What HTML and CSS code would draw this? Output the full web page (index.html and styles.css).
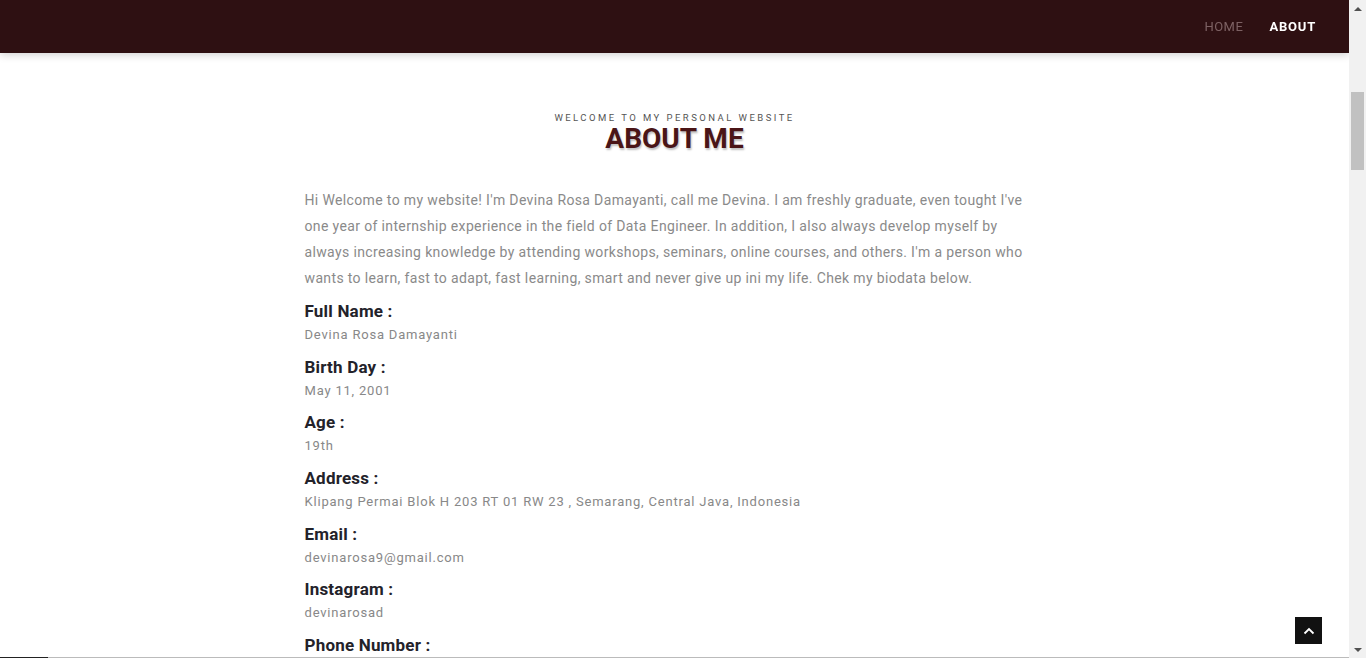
FILE: index.html
```html
<!DOCTYPE html>
<html lang="en">
<head>
<meta charset="utf-8">
<title>About Me</title>
<link rel="stylesheet" href="styles.css">
</head>
<body>
<header class="navbar">
  <nav class="nav-links">
    <a class="nav-link" href="#home">HOME</a>
    <a class="nav-link active" href="#about">ABOUT</a>
  </nav>
</header>
<main>
  <section class="about" id="about">
    <div class="container">
      <div class="section-title">
        <p class="subtitle">WELCOME TO MY PERSONAL WEBSITE</p>
        <h2 class="title">ABOUT ME</h2>
      </div>
      <p class="intro">Hi Welcome to my website! I'm Devina Rosa Damayanti, call me Devina. I am freshly graduate, even tought I've one year of internship experience in the field of Data Engineer. In addition, I also always develop myself by always increasing knowledge by attending workshops, seminars, online courses, and others. I'm a person who wants to learn, fast to adapt, fast learning, smart and never give up ini my life. Chek my biodata below.</p>
      <dl class="biodata">
        <div class="item"><dt>Full Name :</dt><dd>Devina Rosa Damayanti</dd></div>
        <div class="item"><dt>Birth Day :</dt><dd>May 11, 2001</dd></div>
        <div class="item"><dt>Age :</dt><dd>19th</dd></div>
        <div class="item"><dt>Address :</dt><dd>Klipang Permai Blok H 203 RT 01 RW 23 , Semarang, Central Java, Indonesia</dd></div>
        <div class="item"><dt>Email :</dt><dd>devinarosa9@gmail.com</dd></div>
        <div class="item"><dt>Instagram :</dt><dd>devinarosad</dd></div>
        <div class="item"><dt>Phone Number :</dt><dd>+62 812 0000 0000</dd></div>
      </dl>
    </div>
  </section>
</main>
<a class="back-to-top" href="#about" aria-label="Back to top">
  <svg width="12" height="8" viewBox="0 0 12 8"><path d="M1.5 6.5 L6 2 L10.5 6.5" fill="none" stroke="#fff" stroke-width="1.8"/></svg>
</a>
<div class="scrollbar" aria-hidden="true">
  <span class="arrow up"></span>
  <div class="track"><span class="thumb"></span></div>
  <span class="arrow down"></span>
</div>
<div class="progress-line"><span class="progress-fill"></span></div>
</body>
</html>
```
FILE: styles.css
```css
* { box-sizing: border-box; }
html, body { margin: 0; padding: 0; }
body {
  font-family: Roboto, "Noto Sans", Arial, sans-serif;
  background: #fff;
  color: #222;
  padding-right: 17px;
}
.navbar {
  position: fixed;
  top: 0; left: 0; right: 17px;
  height: 53px;
  background: #2e1012;
  box-shadow: 0 2px 8px rgba(0,0,0,0.18);
  display: flex;
  justify-content: flex-end;
  align-items: center;
  padding-right: 33px;
  z-index: 10;
}
.nav-links { display: flex; gap: 26px; }
.nav-link {
  font-size: 13px;
  letter-spacing: 0.5px;
  color: #7d6163;
  text-decoration: none;
}
.nav-link.active { color: #fff; font-weight: 700; letter-spacing: 0.8px; }
main { padding-top: 53px; }
.about { padding: 57px 0 4600px; }
.container { width: 770px; margin: 0 auto; padding: 0 15px; }
.section-title { text-align: center; }
.subtitle {
  margin: 0;
  font-size: 9.5px;
  letter-spacing: 2.45px;
  color: #555;
  line-height: 16px;
}
.title {
  margin: -2px 0 0;
  font-size: 28px;
  font-weight: 700;
  color: #4a1517;
  line-height: 30px;
  text-shadow: 1px 2px 2px rgba(0,0,0,0.25);
}
.intro {
  margin: 33px 0 0;
  font-size: 14px;
  line-height: 26px;
  letter-spacing: 0.36px;
  color: #8a8a8a;
}
.biodata { margin: 9px 0 0; }
.item { margin-bottom: 9.67px; }
dt {
  font-size: 17px;
  font-weight: 700;
  letter-spacing: 0.2px;
  color: #23222a;
  line-height: 22px;
}
dd {
  margin: 2px 0 0;
  font-size: 13px;
  letter-spacing: 0.8px;
  color: #888;
  line-height: 22px;
}
.back-to-top {
  position: fixed;
  right: 44px;
  bottom: 14px;
  width: 27px;
  height: 27px;
  background: #111;
  display: flex;
  align-items: center;
  justify-content: center;
  z-index: 10;
}
.scrollbar {
  position: fixed;
  top: 0; right: 0; bottom: 0;
  width: 17px;
  background: #f1f1f1;
  display: flex;
  flex-direction: column;
  z-index: 20;
}
.track { flex: 1; padding-top: 75px; display: flex; justify-content: center; }
.thumb { display: block; width: 13px; height: 78px; background: #c1c1c1; }
.arrow { display: flex; justify-content: center; align-items: center; height: 17px; flex: none; }
.arrow::before {
  content: "";
  border-left: 4px solid transparent;
  border-right: 4px solid transparent;
}
.arrow.up::before { border-bottom: 4px solid #505050; }
.arrow.down::before { border-top: 4px solid #505050; }
.progress-line {
  position: fixed;
  left: 0; right: 17px; bottom: 0;
  height: 1px;
  background: #bbb;
  z-index: 10;
}
.progress-fill { display: block; width: 48px; height: 1px; background: #222; }
```
